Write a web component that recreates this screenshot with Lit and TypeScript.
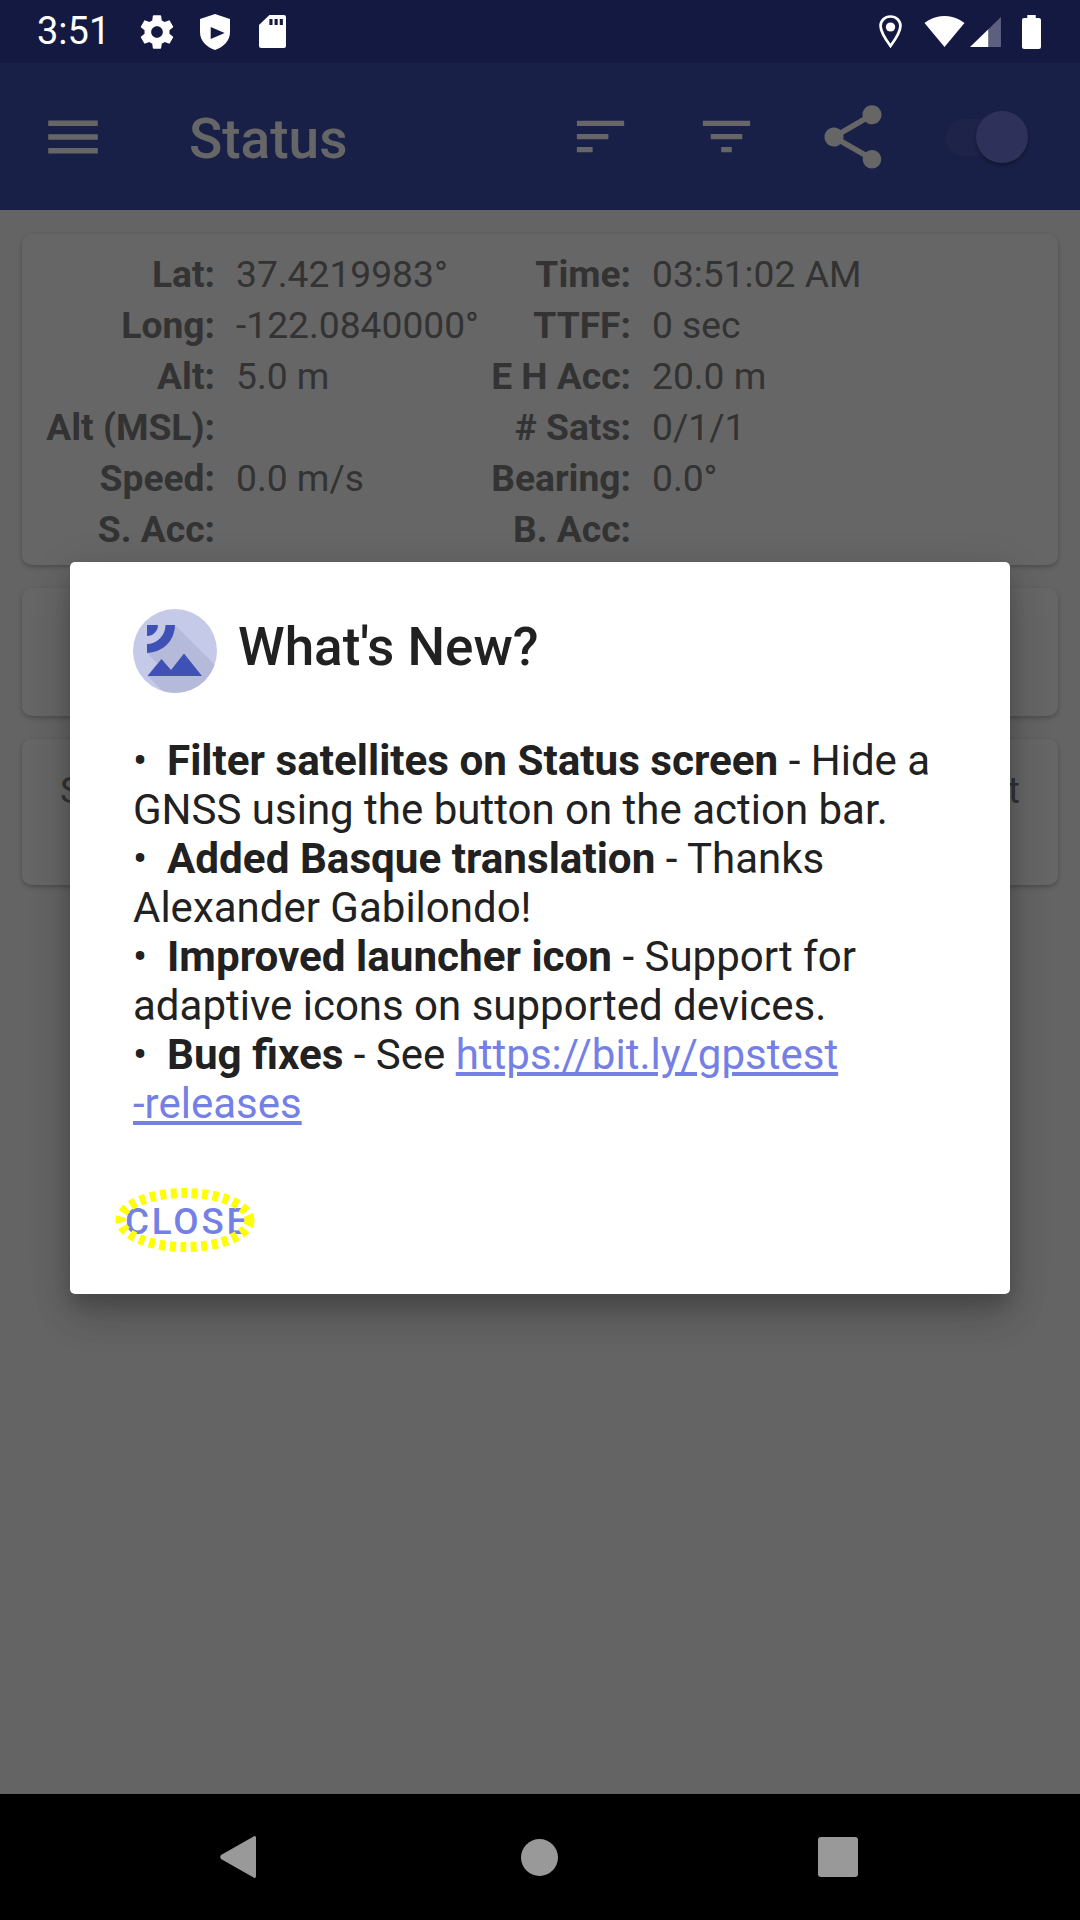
import { LitElement, html, css, svg } from "lit";
import { customElement } from "lit/decorators.js";

const ROWS = [
    ["Lat:", "37.4219983°", "Time:", "03:51:02 AM"],
    ["Long:", "-122.0840000°", "TTFF:", "0 sec"],
    ["Alt:", "5.0 m", "E H Acc:", "20.0 m"],
    ["Alt (MSL):", "", "# Sats:", "0/1/1"],
    ["Speed:", "0.0 m/s", "Bearing:", "0.0°"],
    ["S. Acc:", "", "B. Acc:", ""],
];

const icon = (size: number, d: string) => html`<svg
    width=${size}
    height=${size}
    viewBox="0 0 24 24"
    fill="currentColor"
>
    ${svg`<path d=${d}></path>`}
</svg>`;

const GEAR =
    "M19.43 12.98c.04-.32.07-.64.07-.98s-.03-.66-.07-.98l2.11-1.65c.19-.15.24-.42.12-.64l-2-3.46c-.12-.22-.39-.3-.61-.22l-2.49 1c-.52-.4-1.08-.73-1.69-.98l-.38-2.65C14.46 2.18 14.25 2 14 2h-4c-.25 0-.46.18-.49.42l-.38 2.65c-.61.25-1.17.59-1.69.98l-2.49-1c-.23-.09-.49 0-.61.22l-2 3.46c-.13.22-.07.49.12.64l2.11 1.65c-.04.32-.07.65-.07.98s.03.66.07.98l-2.11 1.65c-.19.15-.24.42-.12.64l2 3.46c.12.22.39.3.61.22l2.49-1c.52.4 1.08.73 1.69.98l.38 2.65c.03.24.24.42.49.42h4c.25 0 .46-.18.49-.42l.38-2.65c.61-.25 1.17-.59 1.69-.98l2.49 1c.23.09.49 0 .61-.22l2-3.46c.12-.22.07-.49-.12-.64l-2.11-1.65zM12 15.5c-1.93 0-3.5-1.57-3.5-3.5s1.57-3.5 3.5-3.5 3.5 1.57 3.5 3.5-1.57 3.5-3.5 3.5z";
const MENU = "M3 18h18v-2H3v2zm0-5h18v-2H3v2zm0-7v2h18V6H3z";
const SORT = "M3 18h6v-2H3v2zM3 6v2h18V6H3zm0 7h12v-2H3v2z";
const FILTER = "M10 18h4v-2h-4v2zM3 6v2h18V6H3zm3 7h12v-2H6v2z";
const SHARE =
    "M18 16.08c-.76 0-1.44.3-1.96.77L8.91 12.7c.05-.23.09-.46.09-.7s-.04-.47-.09-.7l7.05-4.11c.54.5 1.25.81 2.04.81 1.66 0 3-1.34 3-3s-1.34-3-3-3-3 1.34-3 3c0 .24.04.47.09.7L8.04 9.81C7.5 9.31 6.79 9 6 9c-1.66 0-3 1.34-3 3s1.34 3 3 3c.79 0 1.5-.31 2.04-.81l7.12 4.16c-.05.21-.08.43-.08.65 0 1.61 1.31 2.92 2.92 2.92 1.61 0 2.92-1.31 2.92-2.92s-1.31-2.92-2.92-2.92z";

@customElement("app-root")
export class AppRoot extends LitElement {
    static styles = css`
        :host {
            display: flex;
            flex-direction: column;
            position: relative;
            width: 1080px;
            height: 1920px;
            overflow: hidden;
            background: #fafafa;
            font-family: Roboto, "Liberation Sans", sans-serif;
        }

        svg {
            display: block;
            flex: none;
        }

        .status {
            display: flex;
            align-items: center;
            flex: none;
            height: 63px;
            padding: 0 39px 0 37px;
            box-sizing: border-box;
            background: #131940;
            color: #fff;
            position: relative;
            z-index: 2;
        }
        .time {
            width: 68px;
            font-size: 38px;
            line-height: 63px;
        }
        .gear {
            margin-left: 32px;
        }
        .shield {
            margin-left: 23px;
        }
        .sd {
            margin-left: 29px;
        }
        .pin {
            margin-left: auto;
        }
        .wifi {
            margin-left: 22px;
        }
        .signal {
            margin-left: 5px;
        }
        .battery {
            margin-left: 20px;
        }

        .toolbar {
            display: flex;
            align-items: center;
            flex: none;
            height: 147px;
            padding-left: 40px;
            box-sizing: border-box;
            background: #3f51b5;
            color: #fff;
        }
        .title {
            margin-left: 83px;
            padding-top: 4px;
            font-size: 55px;
            font-weight: 500;
        }
        .sort {
            margin-left: auto;
        }
        .filter {
            margin-left: 63px;
        }
        .share {
            margin-left: 57px;
        }
        .switch {
            position: relative;
            width: 82px;
            height: 52px;
            margin: 0 52px 0 55px;
        }
        .track {
            position: absolute;
            left: 0;
            top: 8px;
            width: 68px;
            height: 37px;
            border-radius: 19px;
            background: #4d57b8;
        }
        .thumb {
            position: absolute;
            right: 0;
            top: 0;
            width: 52px;
            height: 52px;
            border-radius: 50%;
            background: #737de2;
            box-shadow: 0 3px 4px rgba(0, 0, 0, 0.3);
        }

        .content {
            flex: 1;
            display: flex;
            flex-direction: column;
            gap: 23px;
            padding: 24px 22px 0;
        }
        .card {
            background: #fff;
            border-radius: 10px;
            box-shadow: 0 2px 5px rgba(0, 0, 0, 0.25);
        }
        .grid {
            display: grid;
            grid-template-columns: 193px 231px 143px 1fr;
            column-gap: 21px;
            grid-auto-rows: 51px;
            padding: 15px 0 10px;
            font-size: 37.2px;
            line-height: 51px;
            white-space: nowrap;
        }
        .lbl {
            text-align: right;
            font-weight: 700;
            color: #808080;
        }
        .val {
            color: #808080;
        }
        .card-empty {
            height: 128px;
        }
        .card-text {
            display: flex;
            justify-content: space-between;
            height: 146px;
            padding: 26px 38px 0;
            box-sizing: border-box;
            font-size: 37.2px;
            line-height: 51px;
            color: #808080;
        }

        .nav {
            display: flex;
            align-items: center;
            flex: none;
            height: 126px;
            background: #000;
            color: #999;
        }
        .back {
            margin-left: 220px;
        }
        .home {
            margin-left: 265px;
            width: 37px;
            height: 37px;
            border-radius: 50%;
            background: #999;
        }
        .recent {
            margin-left: 260px;
            width: 40px;
            height: 40px;
            border-radius: 3px;
            background: #999;
        }

        .scrim {
            position: absolute;
            left: 0;
            top: 63px;
            width: 1080px;
            height: 1731px;
            background: rgba(0, 0, 0, 0.6);
        }
        .dialog {
            position: absolute;
            left: 70px;
            top: 499px;
            width: 940px;
            height: 732px;
            padding: 47px 63px 0;
            box-sizing: border-box;
            background: #fff;
            border-radius: 5px;
            color: #212121;
            box-shadow: 0 24px 38px rgba(0, 0, 0, 0.14), 0 9px 46px rgba(0, 0, 0, 0.12),
                0 11px 15px rgba(0, 0, 0, 0.12);
        }
        .head {
            display: flex;
            align-items: center;
            gap: 21px;
        }
        .head h2 {
            margin: 0;
            padding-bottom: 9px;
            font-size: 53px;
            font-weight: 500;
        }
        .body {
            margin: 43px 0 0;
            font-size: 42px;
            line-height: 49px;
            white-space: nowrap;
        }
        .body b {
            margin-left: -1px;
            font-size: 42.2px;
            font-weight: 700;
        }
        .body a {
            color: #7480e6;
            text-decoration: underline;
        }
        .close {
            position: relative;
            display: inline-block;
            margin: 69px 0 0 -8px;
            font-size: 36.75px;
            line-height: 49px;
            font-weight: 500;
            letter-spacing: 2.8px;
            color: #7480e6;
        }
        .ring {
            position: absolute;
            left: -10px;
            top: -9px;
        }
    `;

    render() {
        return html`
            <div class="status">
                <span class="time">3:51</span>
                <span class="gear">${icon(40, GEAR)}</span>
                <svg class="shield" width="30" height="36" viewBox="0 0 28 36" preserveAspectRatio="none" fill="#fff">
                    <path
                        fill-rule="evenodd"
                        d="M14 0 L28 5 V18 C28 27 22 33 14 36 C6 33 0 27 0 18 V5 Z M10 13 V25 L23 19 Z"
                    ></path>
                </svg>
                <svg class="sd" width="27" height="33" viewBox="0 0 26 33" preserveAspectRatio="none" fill="#fff">
                    <path
                        fill-rule="evenodd"
                        d="M10 0 H24 Q26 0 26 2 V31 Q26 33 24 33 H2 Q0 33 0 31 V10 Z M10 4 V10 H13 V4 Z M15 4 V10 H18 V4 Z M20 4 V10 H23 V4 Z"
                    ></path>
                </svg>
                <svg class="pin" width="23" height="34" viewBox="0 0 22 34" preserveAspectRatio="none">
                    <path
                        d="M11 1.5C5.5 1.5 1.5 5.6 1.5 11c0 6.5 9.5 20 9.5 20s9.500-13.500 9.500-20C20.500 5.600 16.500 1.500 11 1.500z"
                        fill="none"
                        stroke="#fff"
                        stroke-width="2.6"
                    ></path>
                    <circle cx="11" cy="12" r="4.500" fill="#fff"></circle>
                </svg>
                <svg class="wifi" width="41" height="33" viewBox="0 0 40 33" preserveAspectRatio="none" fill="#fff">
                    <path d="M20 32 L39.500 8 C38.800 7.500 31 1 20 1 C9 1 1.200 7.500 .5 8 Z"></path>
                </svg>
                <svg class="signal" width="32" height="32" viewBox="0 0 31 32" preserveAspectRatio="none">
                    <path d="M0 31 L18 13 V31 Z" fill="#fff"></path>
                    <path d="M18 13 L30 1 V31 H18 Z" fill="#5c5f80"></path>
                </svg>
                <svg class="battery" width="19" height="34" viewBox="0 0 18 34" preserveAspectRatio="none" fill="#fff">
                    <path
                        d="M5 0 H13 V3 H16 Q18 3 18 5 V32 Q18 34 16 34 H2 Q0 34 0 32 V5 Q0 3 2 3 H5 Z"
                    ></path>
                </svg>
            </div>

            <div class="toolbar">
                ${icon(66, MENU)}
                <span class="title">Status</span>
                <span class="sort">${icon(63, SORT)}</span>
                <span class="filter">${icon(63, FILTER)}</span>
                <span class="share">${icon(76, SHARE)}</span>
                <div class="switch">
                    <div class="track"></div>
                    <div class="thumb"></div>
                </div>
            </div>

            <div class="content">
                <div class="card grid">
                    ${ROWS.map(
                        (r) => html`
                            <span class="lbl">${r[0]}</span>
                            <span class="val">${r[1]}</span>
                            <span class="lbl">${r[2]}</span>
                            <span class="val">${r[3]}</span>
                        `
                    )}
                </div>
                <div class="card card-empty"></div>
                <div class="card card-text"><span>S</span><span>t</span></div>
            </div>

            <div class="nav">
                <svg class="back" width="36" height="42" viewBox="0 0 36 42" fill="#999">
                    <path
                        d="M34 .3 Q36 -.5 36 2 V40 Q36 42.500 34 41.700 L1 23 Q-.5 21 1 19 Z"
                    ></path>
                </svg>
                <div class="home"></div>
                <div class="recent"></div>
            </div>

            <div class="scrim">
                <div class="dialog">
                    <div class="head">
                        ${this._logo()}
                        <h2>What's New?</h2>
                    </div>
                    <div class="body">
                        •&nbsp; <b>Filter satellites on Status screen</b> - Hide a<br />
                        GNSS using the button on the action bar.<br />
                        •&nbsp; <b>Added Basque translation</b> - Thanks<br />
                        Alexander Gabilondo!<br />
                        •&nbsp; <b>Improved launcher icon</b> - Support for<br />
                        adaptive icons on supported devices.<br />
                        •&nbsp; <b>Bug fixes</b> - See
                        <a>https://bit.ly/gpstest<br />-releases</a>
                    </div>
                    <div class="close">
                        CLOSE
                        <svg class="ring" width="140" height="64" viewBox="0 0 140 64">
                            <ellipse
                                cx="70"
                                cy="32"
                                rx="64.500"
                                ry="27"
                                fill="none"
                                stroke="#ffff00"
                                stroke-width="10"
                                stroke-dasharray="6 4.500"
                            ></ellipse>
                        </svg>
                    </div>
                </div>
            </div>
        `;
    }

    _logo() {
        return html`<svg width="84" height="84" viewBox="0 0 84 84">
            <defs>
                <clipPath id="disc"><circle cx="42" cy="42" r="42"></circle></clipPath>
            </defs>
            <circle cx="42" cy="42" r="42" fill="#c5cae9"></circle>
            <path
                clip-path="url(#disc)"
                d="M42 16 L90 64 L60 90 H38 L14.500 67 L24 54 L14 44 Z"
                fill="#b6bada"
            ></path>
            <path
                d="M14 16 H42 A28 28 0 0 1 14 44 V35 A19 19 0 0 0 32.500 16 Z M14 16 H25 A11 11 0 0 1 14 27 Z"
                fill="#3f51b5"
            ></path>
            <path d="M14.500 67 L28.500 50 L38 61 L51 44.500 L69 67 Z" fill="#3f51b5"></path>
        </svg>`;
    }
}
